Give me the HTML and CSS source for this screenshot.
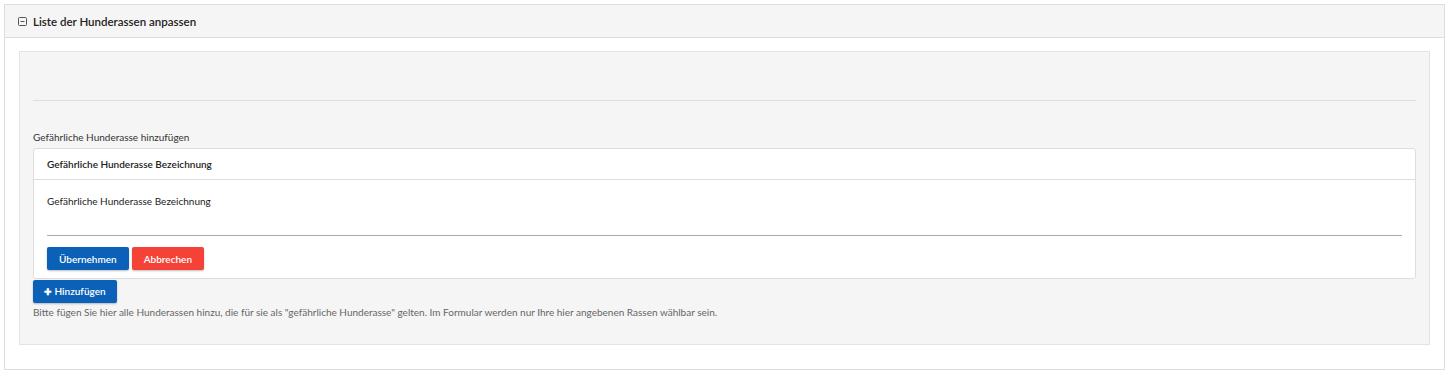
FILE: index.html
```html
<!DOCTYPE html>
<html lang="de">
<head>
    <meta charset="UTF-8">
    <title>Liste der Hunderassen anpassen</title>
    <link rel="stylesheet" href="styles.css">
</head>
<body>

    <div class="panel">
        <div class="panel-heading">
            <svg class="toggle-icon" width="9" height="9" viewBox="0 0 9 9">
                <rect x="0.5" y="0.5" width="8" height="8" rx="1" fill="none" stroke="#555" stroke-width="1"/>
                <line x1="2.5" y1="4.5" x2="6.5" y2="4.5" stroke="#555" stroke-width="1"/>
            </svg>
            <span class="panel-title">Liste der Hunderassen anpassen</span>
        </div>
        <div class="panel-body">
            <div class="well">
                <div class="well-top"></div>
                <hr class="divider">

                <p class="section-label">Gefährliche Hunderasse hinzufügen</p>
                <div class="card">
                    <div class="card-header">Gefährliche Hunderasse Bezeichnung</div>
                    <div class="card-body">
                        <label class="field-label" for="breed">Gefährliche Hunderasse Bezeichnung</label>
                        <input class="field-input" id="breed" type="text">
                        <div class="actions">
                            <button class="btn btn-primary">Übernehmen</button>
                            <button class="btn btn-danger">Abbrechen</button>
                        </div>
                    </div>
                </div>
                <button class="btn btn-primary btn-add"><span class="plus">✚</span> Hinzufügen</button>
                <p class="help-text">Bitte fügen Sie hier alle Hunderassen hinzu, die für sie als "gefährliche Hunderasse" gelten. Im Formular werden nur Ihre hier angebenen Rassen wählbar sein.</p>
            </div>
        </div>
    </div>

</body>
</html>
```

FILE: styles.css
```css
body {
    margin: 4px;
    font-family: Lato, "Open Sans", sans-serif;
    color: #333;
    background: #fff;
}
.panel {
    border: 1px solid #dddddd;
    background: #fff;
}
.panel-heading {
    height: 32px;
    background: #f5f5f5;
    border-bottom: 1px solid #dddddd;
    display: flex;
    align-items: center;
    padding-left: 13px;
}
.toggle-icon {
    margin-right: 6px;
}
.panel-title {
    font-size: 11.5px;
    font-weight: 600;
    color: #222;
}
.panel-body {
    padding: 13px 14px 24px 14px;
}
.well {
    background: #f5f5f5;
    border: 1px solid #e3e3e3;
    padding: 0 13px 26px 13px;
}
.well-top {
    height: 48px;
}
.divider {
    margin: 0;
    border: none;
    border-top: 1px solid #dedede;
}
.section-label {
    margin: 30px 0 5px 0;
    font-size: 10px;
    color: #333;
}
.card {
    background: #fff;
    border: 1px solid #dddddd;
    border-radius: 3px;
}
.card-header {
    height: 30px;
    display: flex;
    align-items: center;
    padding-left: 13px;
    border-bottom: 1px solid #dddddd;
    font-size: 10px;
    font-weight: 600;
    color: #222;
}
.card-body {
    padding: 15px 13px 8px 13px;
}
.field-label {
    display: block;
    font-size: 10px;
    color: #222;
}
.field-input {
    display: block;
    width: 100%;
    box-sizing: border-box;
    height: 23px;
    margin-top: 6px;
    border: none;
    border-bottom: 1px solid #aaaaaa;
    background: transparent;
    outline: none;
}
.actions {
    display: flex;
    gap: 3px;
    margin-top: 11px;
}
.btn {
    height: 23px;
    border: none;
    border-radius: 2px;
    color: #fff;
    font-family: Lato, "Open Sans", sans-serif;
    font-size: 10px;
    font-weight: 600;
    padding: 0 12px;
    box-shadow: 0 1px 2px rgba(0, 0, 0, 0.25);
    cursor: pointer;
}
.btn-primary {
    background-color: #0b61b7;
}
.btn-danger {
    background-color: #f44336;
}
.btn-add {
    margin-top: 0;
    padding: 0 11px;
}
.plus {
    font-size: 9px;
}
.help-text {
    margin: 3px 0 0 0;
    font-size: 10px;
    color: #666;
}
```
